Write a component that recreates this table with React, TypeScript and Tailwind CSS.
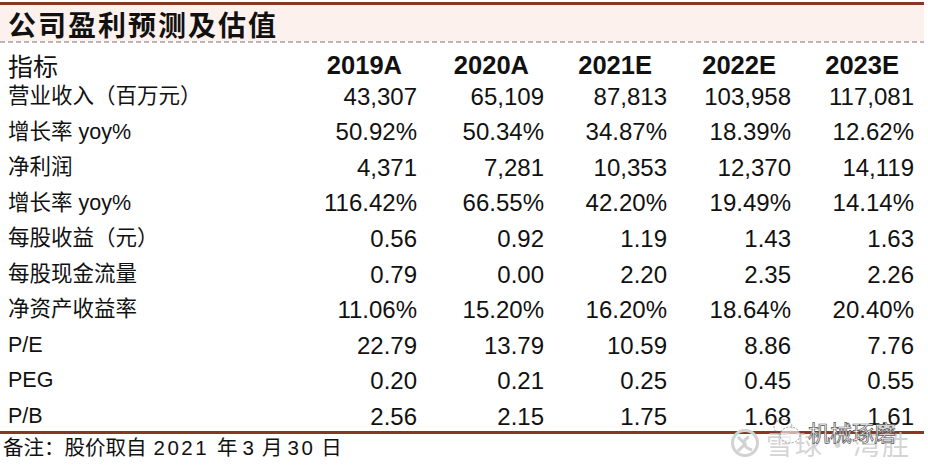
const rows = [
  { label: '营业收入（百万元）', v: ['43,307', '65,109', '87,813', '103,958', '117,081'] },
  { label: '增长率 yoy%', v: ['50.92%', '50.34%', '34.87%', '18.39%', '12.62%'] },
  { label: '净利润', v: ['4,371', '7,281', '10,353', '12,370', '14,119'] },
  { label: '增长率 yoy%', v: ['116.42%', '66.55%', '42.20%', '19.49%', '14.14%'] },
  { label: '每股收益（元）', v: ['0.56', '0.92', '1.19', '1.43', '1.63'] },
  { label: '每股现金流量', v: ['0.79', '0.00', '2.20', '2.35', '2.26'] },
  { label: '净资产收益率', v: ['11.06%', '15.20%', '16.20%', '18.64%', '20.40%'] },
  { label: 'P/E', v: ['22.79', '13.79', '10.59', '8.86', '7.76'] },
  { label: 'PEG', v: ['0.20', '0.21', '0.25', '0.45', '0.55'] },
  { label: 'P/B', v: ['2.56', '2.15', '1.75', '1.68', '1.61'] },
];

const years = ['2019A', '2020A', '2021E', '2022E', '2023E'];

const cols = 'grid grid-cols-[293px_124px_127px_123px_124px_123px]';

export default function App() {
  return (
    <div className="relative w-[928px] h-[472px] overflow-hidden bg-white text-[#111] font-['Liberation_Sans','Noto_Sans_CJK_SC',sans-serif]">
      <div className="w-[924px] pt-[2px]">
        {/* title band */}
        <div className="h-[3px] bg-[#8a3526]" />
        <div className="h-[36px] bg-[#fdf1ed] pl-[8px] pt-[2px] flex items-center">
          <h1 className="text-[28px] leading-none font-bold tracking-[2px] font-['Noto_Sans_CJK_SC',sans-serif]">
            公司盈利预测及估值
          </h1>
        </div>
        <div className="h-[2px] bg-[linear-gradient(to_right,#bdb6b2_5px,transparent_5px)] bg-[length:8px_2px]" />

        {/* header */}
        <div className={`${cols} h-[36px] pt-[8px] items-center leading-[28px]`}>
          <div className="pl-[8px] text-[25px] font-['Noto_Sans_CJK_SC',sans-serif]">指标</div>
          {years.map((y) => (
            <div key={y} className="text-right pr-[15px] text-[25.5px] font-bold">
              {y}
            </div>
          ))}
        </div>

        {/* rows */}
        {rows.map((r, i) => (
          <div key={i} className={`${cols} h-[35.55px] items-center`}>
            <div className="pl-[8px] text-[21.5px] leading-none whitespace-nowrap">{r.label}</div>
            {r.v.map((v, j) => (
              <div key={j} className="text-right text-[24px] leading-none">
                {v}
              </div>
            ))}
          </div>
        ))}

        <div className="h-[3px] -mt-[3px] bg-[#8a3526]" />

        {/* footnote */}
        <p className="pl-[3px] h-[28px] flex items-center text-[20.5px] leading-none font-['Liberation_Sans','Noto_Sans_CJK_SC',sans-serif]">
          <span>备注：股价取自</span>
          <span className="ml-[7px] tracking-[2.5px]">2021</span>
          <span className="ml-[8px]">年</span>
          <span className="ml-[5px]">3</span>
          <span className="ml-[8px]">月</span>
          <span className="ml-[5px] tracking-[2.5px]">30</span>
          <span className="ml-[6px]">日</span>
        </p>
      </div>

      {/* watermarks */}
      <div className="absolute left-[728px] top-[428px] flex items-center gap-[4px] text-[#c9c9c9]/80">
        <svg width="34" height="30" viewBox="0 0 34 30" fill="none" stroke="#d2d2d2" strokeWidth="3">
          <circle cx="17" cy="15" r="12.5" />
          <path d="M10 9 L17 16 L10 23" />
          <path d="M21 9 C 14 12, 14 19, 24 22" />
        </svg>
        <span className="text-[27px] leading-none tracking-[2px] font-['Noto_Sans_CJK_SC',sans-serif]">雪球·湾胜</span>
      </div>
      <div className="absolute left-[772px] top-[416px] flex items-center gap-[6px]">
        <svg width="30" height="30" viewBox="0 0 30 30" fill="none" stroke="#777" strokeWidth="0.8" strokeDasharray="2 1.5">
          <ellipse cx="11" cy="11" rx="9" ry="7.5" />
          <ellipse cx="18" cy="19" rx="10" ry="8" fill="white" fillOpacity="0.6" />
        </svg>
        <span className="text-[22px] leading-none text-white [-webkit-text-stroke:0.7px_#555] font-['Noto_Sans_CJK_SC',sans-serif]">
          机械琢磨
        </span>
      </div>
    </div>
  );
}
